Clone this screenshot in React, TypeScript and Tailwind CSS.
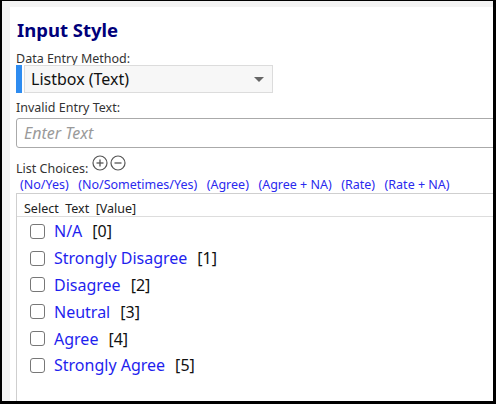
import React from "react";

const font = { fontFamily: '"Noto Sans", "Open Sans", sans-serif' };

function CircleIcon({ plus }: { plus?: boolean }) {
  return (
    <svg width="16" height="16" viewBox="0 0 16 16" className="block">
      <circle cx="8" cy="8" r="7" fill="none" stroke="#555" strokeWidth="1.2" />
      <line x1="4.5" y1="8" x2="11.5" y2="8" stroke="#555" strokeWidth="1.3" />
      {plus && <line x1="8" y1="4.5" x2="8" y2="11.5" stroke="#555" strokeWidth="1.3" />}
    </svg>
  );
}

const options = [
  ["N/A", "0"],
  ["Strongly Disagree", "1"],
  ["Disagree", "2"],
  ["Neutral", "3"],
  ["Agree", "4"],
  ["Strongly Agree", "5"],
];

const presets = ["(No/Yes)", "(No/Sometimes/Yes)", "(Agree)", "(Agree + NA)", "(Rate)", "(Rate + NA)"];

export default function App() {
  return (
    <div
      style={font}
      className="w-[496px] h-[404px] bg-[#f3f3f3] border-l-2 border-r-[3px] border-b-[3px] border-t border-black overflow-hidden pl-2 pt-[6px]"
    >
      <div className="h-full bg-white pl-[6px] flex flex-col overflow-hidden">
        <div className="text-[18.5px] font-bold text-[#00007a] leading-none h-[19px] mt-[14px] ml-[1px]">Input Style</div>
        <div className="text-[12.5px] text-[#333] leading-none h-[12px] mt-[13px]">Data Entry Method:</div>
        <div className="flex mt-0 h-[28px] shrink-0">
          <div className="w-[6px] bg-[#2e8cf0]" />
          <div className="ml-[2px] w-[249px] border border-[#dcdcdc] bg-[#f7f7f7] flex items-center justify-between pl-[6px] pr-[8px]">
            <span className="text-[16px] text-[#111]">Listbox (Text)</span>
            <span className="w-0 h-0 border-l-[5px] border-r-[5px] border-t-[5px] border-l-transparent border-r-transparent border-t-[#666]" />
          </div>
        </div>
        <div className="text-[12.5px] text-[#333] leading-none h-[12px] mt-[9px]">Invalid Entry Text:</div>
        <div className="mt-[4px] h-[30px] w-[500px] shrink-0 border border-[#aaa] rounded-[3px] flex items-center pl-[7px]">
          <span className="text-[16px] italic text-[#9a9a9a]">Enter Text</span>
        </div>
        <div className="flex items-start mt-[7px] h-[20px] shrink-0">
          <span className="text-[12.5px] text-[#333] leading-none mt-[8px]">List Choices:</span>
          <span className="ml-[4px]"><CircleIcon plus /></span>
          <span className="ml-[2px]"><CircleIcon /></span>
        </div>
        <div className="flex gap-[9.5px] ml-[4px] mt-[4px] h-[12px] text-[12.5px] text-[#2a2aee] leading-none">
          {presets.map((p) => (
            <span key={p}>{p}</span>
          ))}
        </div>
        <div className="mt-[2px] flex-1 border-t border-l border-[#cfcfcf]">
          <div className="text-[12.5px] text-[#222] leading-none h-[23px] pl-[7px] pt-[9px] border-b border-[#ddd] whitespace-pre">
            {"Select  Text  [Value]"}
          </div>
          <div className="pt-[1px] pl-[13px] flex flex-col">
            {options.map(([t, v]) => (
              <div key={v} className="flex items-center h-[26.8px]">
                <span className="w-[15px] h-[15px] border border-[#777] rounded-[3px] bg-white" />
                <span className="ml-[9px] text-[16px] text-[#1f1fee]">{t}</span>
                <span className="ml-[10px] text-[16px] text-[#111]">[{v}]</span>
              </div>
            ))}
          </div>
        </div>
      </div>
    </div>
  );
}
